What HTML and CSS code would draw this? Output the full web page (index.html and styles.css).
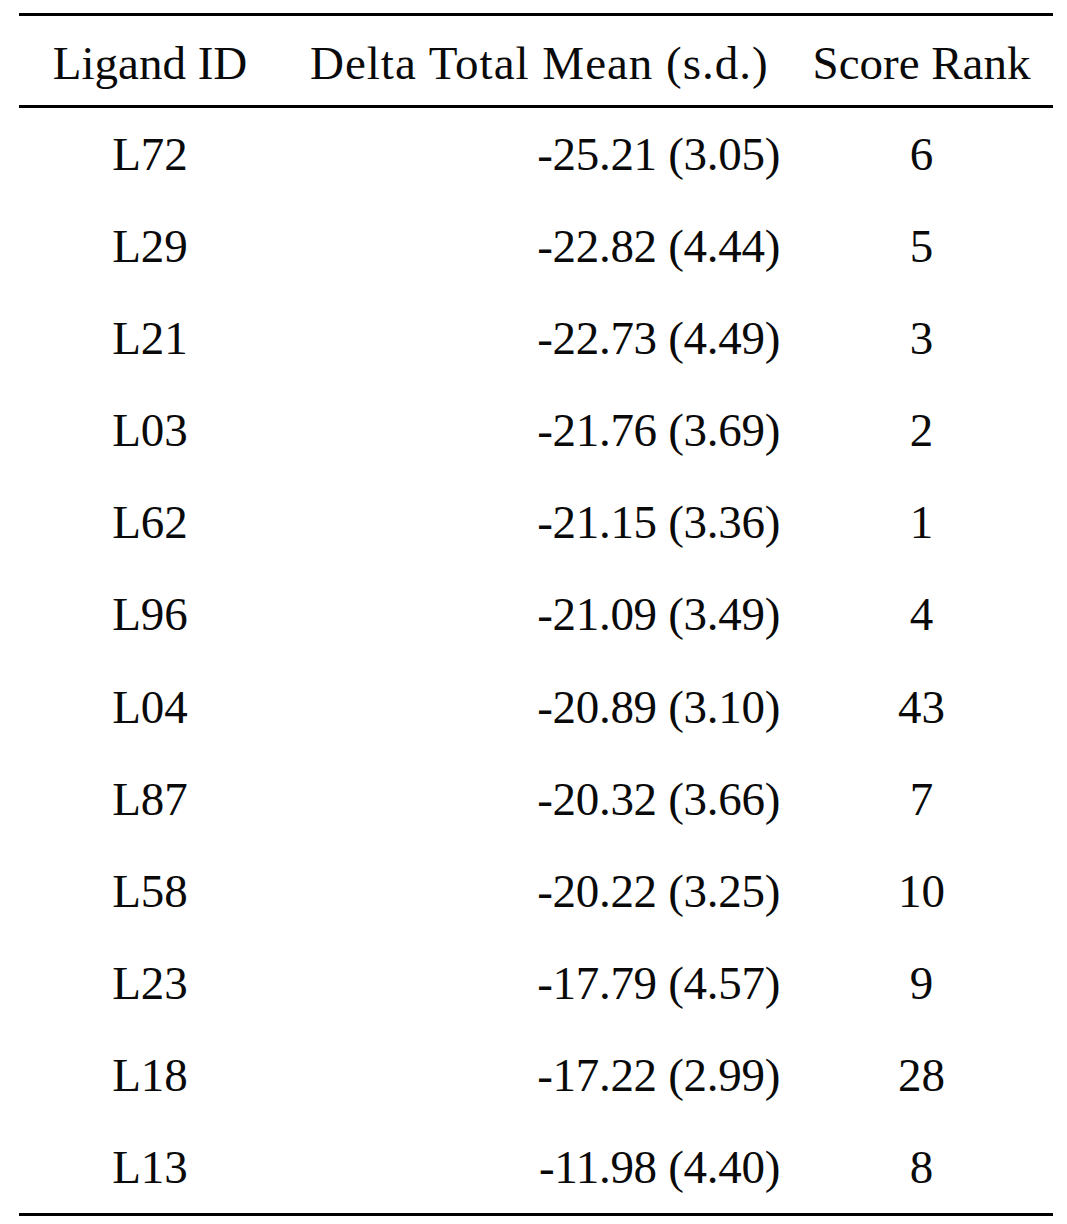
FILE: index.html
```html
<!DOCTYPE html>
<html>
<head>
<meta charset="utf-8">
<link rel="stylesheet" href="styles.css">
</head>
<body>
<div class="table">
  <div class="row head">
    <div class="c1">Ligand ID</div>
    <div class="c2h">Delta Total Mean (s.d.)</div>
    <div class="c3">Score Rank</div>
  </div>
  <div class="row"><div class="c1">L72</div><div class="c2">-25.21 (3.05)</div><div class="c3">6</div></div>
  <div class="row"><div class="c1">L29</div><div class="c2">-22.82 (4.44)</div><div class="c3">5</div></div>
  <div class="row"><div class="c1">L21</div><div class="c2">-22.73 (4.49)</div><div class="c3">3</div></div>
  <div class="row"><div class="c1">L03</div><div class="c2">-21.76 (3.69)</div><div class="c3">2</div></div>
  <div class="row"><div class="c1">L62</div><div class="c2">-21.15 (3.36)</div><div class="c3">1</div></div>
  <div class="row"><div class="c1">L96</div><div class="c2">-21.09 (3.49)</div><div class="c3">4</div></div>
  <div class="row"><div class="c1">L04</div><div class="c2">-20.89 (3.10)</div><div class="c3">43</div></div>
  <div class="row"><div class="c1">L87</div><div class="c2">-20.32 (3.66)</div><div class="c3">7</div></div>
  <div class="row"><div class="c1">L58</div><div class="c2">-20.22 (3.25)</div><div class="c3">10</div></div>
  <div class="row"><div class="c1">L23</div><div class="c2">-17.79 (4.57)</div><div class="c3">9</div></div>
  <div class="row"><div class="c1">L18</div><div class="c2">-17.22 (2.99)</div><div class="c3">28</div></div>
  <div class="row"><div class="c1">L13</div><div class="c2">-11.98 (4.40)</div><div class="c3">8</div></div>
</div>
</body>
</html>
```
FILE: styles.css
```css
html, body {
  margin: 0;
  padding: 0;
  background: #ffffff;
}
body {
  font-family: "Liberation Serif", "Times New Roman", serif;
  font-size: 47px;
  color: #0a0a0a;
}
.table {
  margin: 13px 0 0 19px;
  width: 1034px;
  border-top: 3px solid #000000;
  border-bottom: 3px solid #000000;
}
.row {
  display: grid;
  grid-template-columns: 262px 509px 263px;
  height: 92.1px;
  line-height: 92.1px;
  white-space: nowrap;
}
.head {
  height: 84px;
  line-height: 84px;
  padding-top: 5px;
  border-bottom: 3px solid #000000;
}
.c1 {
  text-align: center;
}
.c2h {
  text-align: left;
  padding-left: 29px;
  letter-spacing: 1px;
}
.c2 {
  text-align: right;
  padding-right: 10px;
  letter-spacing: -0.3px;
}
.c3 {
  text-align: center;
}
```
